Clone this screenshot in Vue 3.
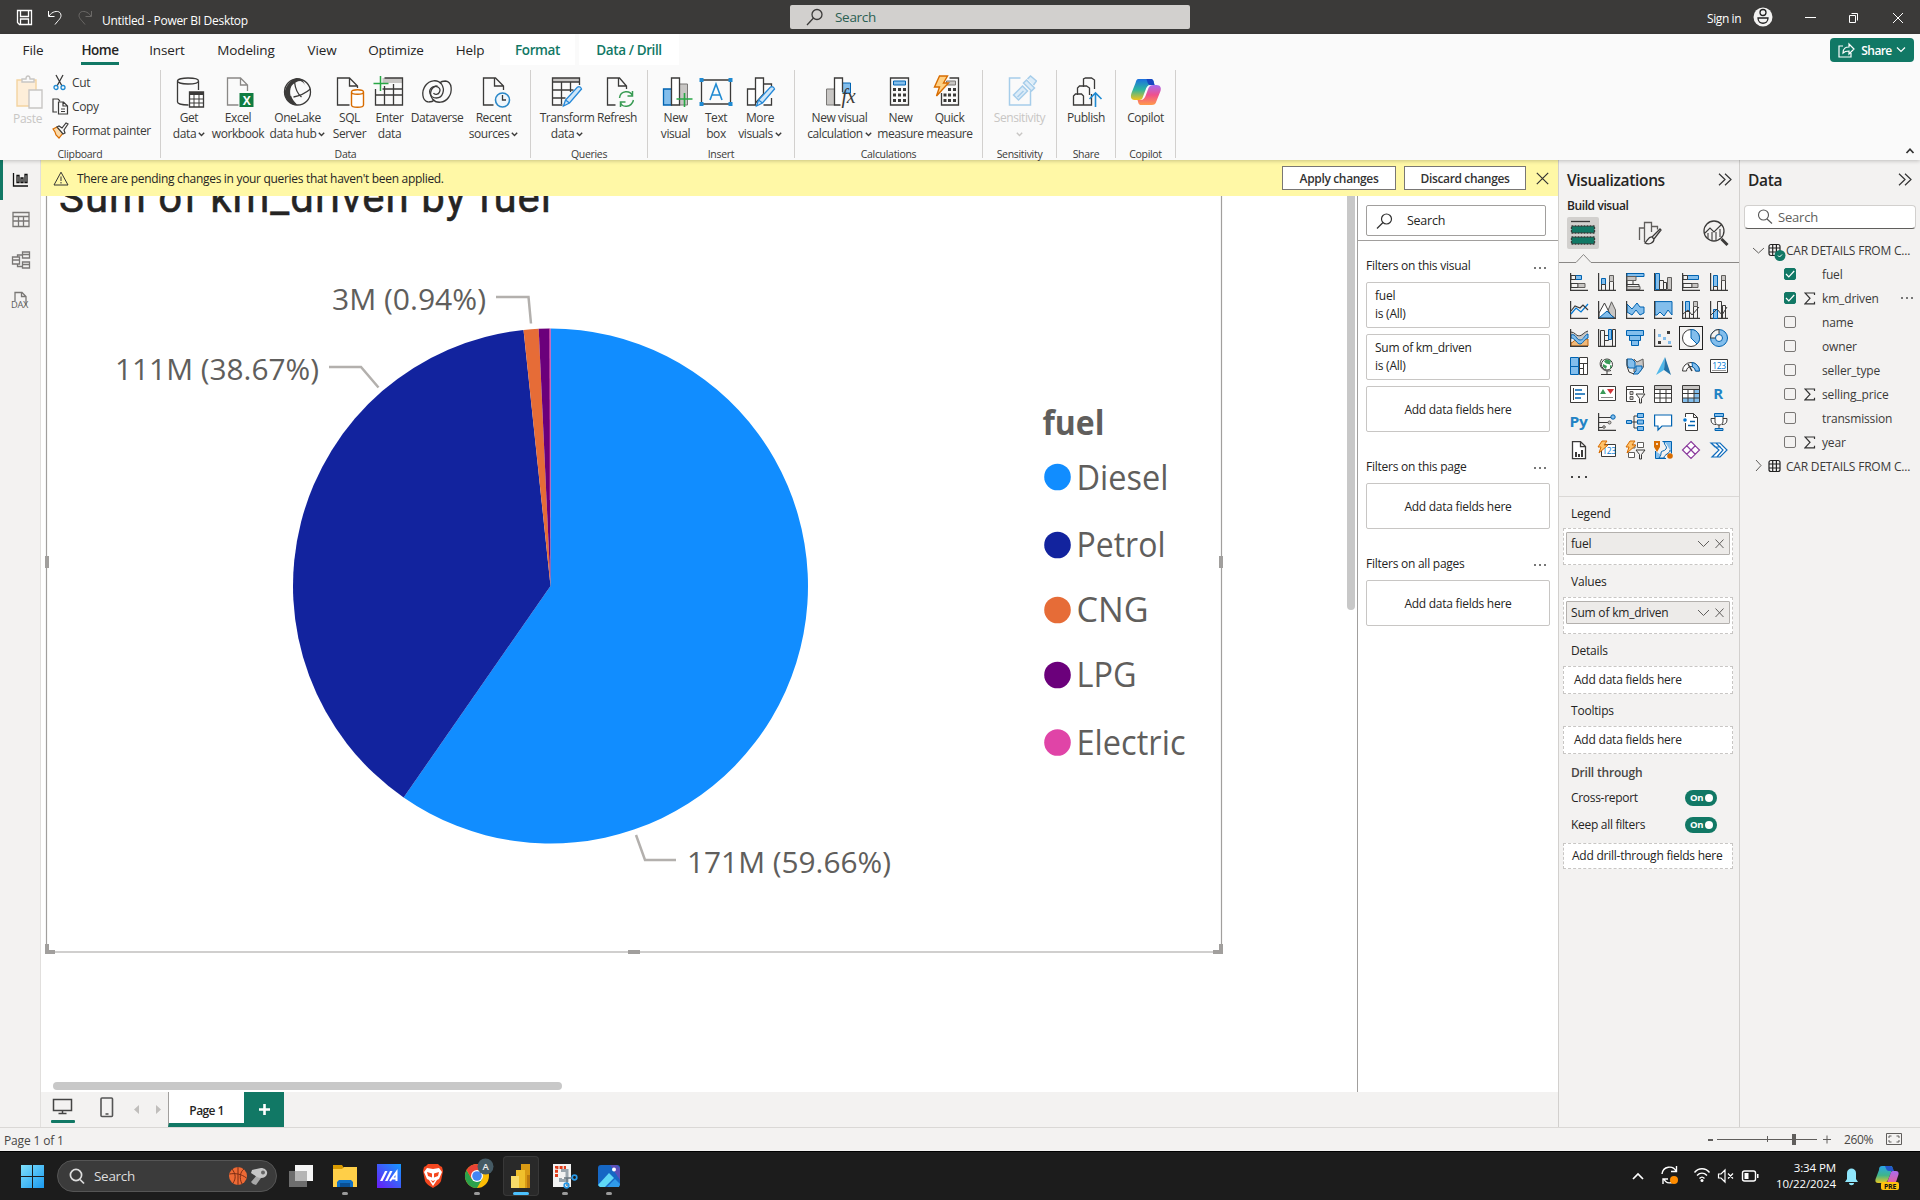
<script setup>
const D = '#3b3a39'
const dark = `fill="none" stroke="${D}" stroke-width="1.3"`
const pencil = '<path fill="#cfe6f8" stroke="#2488d8" stroke-width="1.3" d="M13 30l2-6L27 11q3-1 4 2L19 27zM15 24l4 3"/>'

const ribbonIcons = {
  get: `<path ${dark} d="M16 29C10 29 5 28 5 26V5c0-4 21-4 21 0v9M5 5c0 4 21 4 21 0"/><path fill="#fff" stroke="${D}" stroke-width="1.300" d="M17 16h14v15H17z"/><path fill="${D}" d="M17 16h14v3H17z"/><path fill="none" stroke="${D}" d="M17 23h14M17 27h14M21.500 18v13M26.500 18v13"/>`,
  excel: `<path fill="none" stroke="#8a8886" stroke-width="1.300" d="M17 29H6V2h13l7 7v6M19 2v7h7"/><path fill="#107c41" d="M18 17h14v14H18z"/><text x="25" y="28.500" text-anchor="middle" font-size="12" font-weight="700" fill="#fff">X</text>`,
  lake: `<circle cx="16" cy="16" r="13" ${dark}/><path fill="${D}" d="M15 2C7 5 1 14 4 21c2 5 7 8 11 8C9 24 7 16 10 10c2-3 6-5 9-5 3 1 4 3 5 5-2-5-4-8-9-8z"/><path ${dark} d="M13 6c1 8 3 12 7 15M12 21c6-1 11-3 17-8M15 29c-3-3-5-5-6-9"/>`,
  sql: `<path ${dark} d="M16 29H4V2h12l8 8v2M16 2v8h8"/><path fill="#fff" stroke="#d86c00" stroke-width="1.400" d="M18 16c0-3 12-3 12 0v13c0 3-12 3-12 0zM18 16c0 3 12 3 12 0"/>`,
  enter: `<path fill="#c8c6c4" d="M9 2h20v5H9z"/><path ${dark} d="M11 2h18v27H2V13M2 19h27M9 13h20M11 10v19M20 8v21"/><path fill="none" stroke="#28a745" stroke-width="1.500" d="M7 0v15M0 7.500h15"/>`,
  dataverse: `<g ${dark}><path d="M8 26C1 25 1 15 5 9.500 9 4 17 3 21 8c4 6 1 14-5 14-7 0-9-8-4-11 4-2 9 1 7 5-1 3-5 3-6 1"/><path d="M25 5c7 1 7 11 3 16.500-4 5.500-12 6.500-16 1.500-4-6-1-13 5-13M8 26c3 0 5-1 6-2M25 5c-3 0-5 1-6 2"/></g>`,
  recent: `<path ${dark} d="M16 29H6V2h12l8 8v4M17 2v8h9"/><circle cx="25" cy="24" r="7" fill="#eff6fc" stroke="#2b88c8" stroke-width="1.600"/><path ${dark} d="M25 19v5h3.500"/>`,
  transform: `<path fill="#c8c6c4" d="M2 2h27v4H2z"/><path ${dark} d="M12 29H2V2h27v7M2 6h27M2 14h21M2 22h13M11 6v22M20 6v10"/>${pencil}`,
  refresh: `<path ${dark} d="M15 29H7V2h12l7 8v3M18 2v8h8"/><path fill="none" stroke="#389b53" stroke-width="1.500" d="M19 22c1-8 11-8 13-2M32 15v5h-5M33 24c-2 8-12 8-13 2M20 31v-5h5"/>`,
  visual: `<path fill="#83beec" stroke="#0063b1" stroke-width="1.300" d="M4 13h8v16H4z"/><path fill="#c8c6c4" stroke="#797775" stroke-width="1" d="M20 8h8v21h-8z"/><path fill="#fff" stroke="${D}" stroke-width="1.300" d="M12 2h8v27h-8z"/><path fill="none" stroke="#28a745" stroke-width="1.600" d="M25 17v14M17 23h16"/>`,
  textbox: `<path ${dark} d="M2 4h29v24H2z"/><g fill="#1f8ad2"><path d="M0 2h4v4H0zM29 2h4v4h-4zM0 26h4v4H0zM29 26h4v4h-4z"/></g><path fill="none" stroke="#1f8ad2" stroke-width="1.600" d="M10.500 24L16.500 8l6 16M12.500 19h8"/>`,
  more: `<path fill="#fff" stroke="${D}" stroke-width="1.300" d="M4 29V13h8v16zM12 2h8v16l-8 9zM20 8h8v4M28 22v7h-8"/>${pencil}`,
  calc: `<path fill="#c8c6c4" stroke="#797775" d="M3 13h8v16H3z"/><path fill="#83beec" stroke="#0063b1" d="M19 7h8v10h-8z"/><path fill="#fff" stroke="${D}" stroke-width="1.300" d="M17 29h-6V2h8v14"/><text x="18" y="27" font-size="20" font-style="italic" font-family="Liberation Serif, serif" fill="${D}">fx</text>`,
  measure: `<path ${dark} d="M6 2h18v27H6z"/><path fill="#83beec" stroke="#0063b1" d="M9 5h12v4H9z"/><path fill="${D}" d="M8.500 12h3v3h-3zM13.500 12h3v3h-3zM18.500 12h3v3h-3zM8.500 17.500h3v3h-3zM13.500 17.500h3v3h-3zM18.500 17.500h3v3h-3zM8.500 23h3v3h-3zM13.500 23h3v3h-3zM18.500 23h3v3h-3z"/>`,
  quick: `<path ${dark} d="M16 2h9v27H8V17"/><path fill="#c8c6c4" stroke="#797775" d="M13 5h9v4h-9z"/><path fill="${D}" d="M14.500 12h3v3h-3zM19.500 12h3v3h-3zM10 17.500h3v3h-3zM14.500 17.500h3v3h-3zM19.500 17.500h3v3h-3zM10 23h3v3h-3zM14.500 23h3v3h-3zM19.500 23h3v3h-3z"/><path fill="#ffd083" stroke="#d86c00" stroke-width="1.400" d="M6 0h8l-4 7h5L3 20l3-9H1z"/>`,
  sensitivity: `<g fill="none" stroke="#a6cdea" stroke-width="1.500"><path d="M17 2H6v27h21V15"/><path fill="#dcecf8" d="M10 19l9-9 5 5-9 9zM20 7l3-3 8 8-3 3zM24 3l3-3 6 5-3 4M14 21l6-6"/></g>`,
  publish: `<path ${dark} d="M14 11V3l2-1h6l3 2v9M8 19v-7l2-2h7l3 2v7M4 29V20l2-2h6l2 2v9zM14 29h8V18"/><path fill="none" stroke="#1f8ad2" stroke-width="1.600" d="M26 31V17M20 23l6-6 6 6"/>`,
  copilot: `<defs><linearGradient id="cpa" x1="0" y1="0" x2="0" y2="1"><stop offset="0" stop-color="#1b6fe0"/><stop offset=".5" stop-color="#2cb5a0"/><stop offset="1" stop-color="#f4c21a"/></linearGradient><linearGradient id="cpb" x1="0" y1="0" x2="0" y2="1"><stop offset="0" stop-color="#a96cf0"/><stop offset=".5" stop-color="#f0508c"/><stop offset="1" stop-color="#ff9a4a"/></linearGradient></defs><path fill="url(#cpa)" d="M9 3h12c3 0 3 2 4 6h-4c-3 0-4 2-5 5l-3 8c-1 2-2 2-5 2H5c-4 0-4-4-3-7l4-10c1-3 1-4 3-4z"/><path fill="#1746c0" d="M17 3h4c3 0 3 2 4 6h-5c-2-1-2-3-3-6z"/><path fill="url(#cpb)" d="M24 9h3c4 0 5 3 4 6l-4 10c-1 3-2 4-5 4H12c-3 0-3-2-4-5h3c3 0 4-2 5-4l3-8c1-2 2-3 5-3z"/>`
}

const groups = [
  { name: 'Data', w: 370, pad: 4, items: [
    ['get', 48, 'Get', 'data', 1], ['excel', 50, 'Excel', 'workbook'], ['lake', 69, 'OneLake', 'data hub', 1],
    ['sql', 35, 'SQL', 'Server'], ['enter', 45, 'Enter', 'data'], ['dataverse', 50, 'Dataverse', ''], ['recent', 63, 'Recent', 'sources', 1]] },
  { name: 'Queries', w: 117, pad: 7, items: [['transform', 58, 'Transform', 'data', 1], ['refresh', 42, 'Refresh', '']] },
  { name: 'Insert', w: 147, pad: 7, items: [['visual', 41, 'New', 'visual'], ['textbox', 40, 'Text', 'box'], ['more', 48, 'More', 'visuals', 1]] },
  { name: 'Calculations', w: 188, pad: 9, items: [['calc', 71, 'New visual', 'calculation', 1], ['measure', 51, 'New', 'measure'], ['quick', 47, 'Quick', 'measure']] },
  { name: 'Sensitivity', w: 74, pad: 7, items: [['sensitivity', 59, 'Sensitivity', '', 1]] },
  { name: 'Share', w: 59, pad: 7, items: [['publish', 44, 'Publish', '']] },
  { name: 'Copilot', w: 60, pad: 7, items: [['copilot', 45, 'Copilot', '']] }
]

const tabs = [
  ['File', 66], ['Home', 68, 'on'], ['Insert', 66], ['Modeling', 92], ['View', 60], ['Optimize', 88], ['Help', 60]
]

const B = 'fill="#83beec" stroke="#0063b1"'
const G = 'fill="#c8c6c4" stroke="#605e5c"'
const L = `fill="none" stroke="${D}"`
const W = `fill="#fff" stroke="${D}"`
const axis = `<path ${L} stroke-width="1.200" d="M.6 0v17.400H18"/>`
const bolt = '<path fill="#ffc36b" stroke="#d86c00" d="M4 0h5L6 4h4L1 12l2-6H0z"/>'
const funnel = `<path fill="#f3f2f1" stroke="${D}" d="M10 9h9l-3.500 4.500V18h-2v-4.500z"/>`
const vizIcons = [
  axis + `<path ${B} d="M5.500 2.500h6v4h-6z"/><path ${L} d="M1 2.500h4.500v4H1zM1 10.500h7v4H1z"/><path ${G} d="M8 10.500h7v4H8z"/>`,
  axis + `<path ${B} d="M3.500 5.500h4v6h-4z"/><path ${L} d="M3.500 11.500h4v6h-4zM11.500 8.500h4v9h-4z"/><path ${G} d="M11.500 2.500h4v6h-4z"/>`,
  axis + `<path ${B} d="M1 .5h17v3H1z"/><path ${L} d="M1 11.500h12v3H1zM1 7.500h6v4H1z"/><path ${G} d="M1 3.500h9v4H1zM1 13.500h13v3H1z"/>`,
  axis + `<path ${B} d="M1.500.5h4v16h-4z"/><path ${L} d="M5.500 7.500h4v9h-4zM9.500 9.500h3v7h-3z"/><path ${G} d="M13.500 4.500h4v12h-4z"/>`,
  axis + `<path ${B} d="M5.500 2.500h11v4h-11z"/><path ${L} d="M1 2.500h4.500v4H1zM1 10.500h9v4H1z"/><path ${G} d="M10 10.500h6v4h-6z"/>`,
  axis + `<path ${B} d="M3.500 2.500h4v11h-4z"/><path ${L} d="M3.500 13.500h4v4h-4zM11.500 6.500h4v11h-4z"/><path ${G} d="M11.500 2.500h4v5h-4z"/>`,
  axis + `<path fill="none" stroke="#0078d4" stroke-width="1.200" d="M1 13l5-6 5 4 7-8"/><path ${L} stroke-width="1.200" d="M1 10l4-5 5 2 3-3 5 5"/>`,
  `<path ${G} d="M9 12L13.500.8 17.500 9v8z"/><path ${W} d="M1 12L6.500 2 12 13l-6 4H1z"/><path ${B} d="M1 17l8-7 7 7z"/>` + axis,
  `<path ${B} d="M1 3l5 5 5-6 3 4h4v6l-4 2-4-5-4 5-5-3z"/>` + axis,
  `<path ${B} d="M1 .6h17V14l-4-5-4 6-4-4-3 3H1z"/>` + axis,
  axis + `<path ${B} d="M3.500.5h4v10h-4z"/><path ${L} d="M3.500 10.500h4v7h-4zM11.500 5.500h4v12h-4zM1 13l5-4 4 5 7-8"/><path ${G} d="M11.500.5h4v5h-4z"/>`,
  axis + `<path ${L} d="M7.500.5h4v17h-4zM12.500 4.500h3v13h-3z"/><path ${B} d="M3.500 8.500h4v9h-4z"/><path ${L} d="M1 14l6-6 5 6 5-8"/>`,
  `<path fill="#c8c6c4" d="M1 3l8 5 9-6v5l-9 4-8-5z"/><path fill="#f0b878" stroke="#c2640c" d="M1 14c3-1 4-4 6-4s3 4 5 3 3-3 6-3v7H1z"/><path ${B} d="M1 6c5-2 5 5 9 5s4-5 8-6v4c-4 1-5 6-8 6s-5-6-9-6z"/><path ${L} d="M1 3c4 0 5 4 8 4s5-4 9-5"/>` + axis,
  axis + `<path ${L} d="M2.500 1.500h4v16h-4zM14.500.5h3v17h-3z"/><path ${L} d="M6.500 6.500h4v5h-4z"/><path ${B} d="M10.500.5h3v10h-3z"/>`,
  `<path ${B} d="M.5 1.500h17v5H.5zM3.500 6.500h11v5h-11zM5.500 11.500h7v5h-7z"/>`,
  axis + `<path fill="#83beec" d="M4 5h3v3H4zM9 8h3v3H9zM14 12h3v3h-3z"/><path fill="${D}" d="M13 2h3v3h-3zM4 12h3v3H4z"/>`,
  `<circle cx="9" cy="9" r="8.500" ${W}/><path ${B} d="M9 9V.5a8.500 8.500 0 0 1 6 14.500z"/>`,
  `<circle cx="9" cy="9" r="8.500" ${B}/><path fill="#f3f2f1" stroke="${D}" d="M9 .5A8.500 8.500 0 0 0 .5 9h5A3.500 3.500 0 0 1 9 5.500z"/><circle cx="9" cy="9" r="3.500" fill="#f3f2f1" stroke="#0063b1"/>`,
  `<path ${W} d="M9.500.5h8v17h-8z"/><path ${B} d="M.5.500h8v9H.5zM.5 9.500h8v8H.5z"/><path ${L} d="M9 6.500h8.500M13.500 6.500v11M9 11.500h4.500"/>`,
  `<circle cx="9" cy="7.500" r="5.500" ${W}/><path fill="#3a9a58" d="M8 2.500l5 1-1 4-4-1-2-2zM5 7l4 2-1 3-3-2zM12 8l2 1-2 3z"/><path ${L} d="M4 2C-1 8 5 16 13 13.500M9 14v3.500M3 17.500h11"/>`,
  `<path ${G} d="M8 2l3 3 6-3 .5 8-4 5H8z"/><path ${B} d="M1 2h5l3 3v6H3L1 8zM10 9h6v3l-4 5H7l3-3z"/><path ${L} d="M1 2v7l2 6 5 2"/>`,
  `<path fill="#50b8ea" d="M11 0L2 18l8-5z"/><path fill="#2272a8" d="M11 0l6 18-7-5z"/>`,
  `<path ${W} d="M.5 14A8.500 8.500 0 0 1 17.500 14h-4a4.500 4.500 0 0 0-9 0z"/><path ${B} d="M10 5.500a8.500 8.500 0 0 1 7.500 8.500h-4a4.500 4.500 0 0 0-3-4z"/><path stroke="${D}" stroke-width="1.500" d="M6 7l4 7"/>`,
  `<path ${W} d="M.5 2.500h17v13H.5z"/><text x="9" y="12" font-size="8.500" text-anchor="middle" fill="#0078d4">123</text><path stroke="#999" d="M2 13.500h14"/>`,
  `<path ${W} d="M.5.500h17v17H.5z"/><path ${L} d="M3.500 3v12"/><path stroke="#0063b1" stroke-width="1.700" d="M5 5h7M5 9h10M5 13h6"/>`,
  `<path ${W} d="M.5 1.500h17v14H.5z"/><path fill="#3a9a58" d="M2 9l3-5 3 5z"/><path fill="#d13438" d="M9 4h7l-3.500 5z"/><path stroke="#888" d="M3 12.500h12"/>`,
  `<path ${W} d="M10 16.500H.5V1.500h17V8M.5 4.500h17"/><path ${G} d="M4 6.500h3v3H4zM4 11.500h3v3H4z"/>` + funnel,
  `<path ${W} d="M.5.500h17v17H.5z"/><path fill="#c8c6c4" d="M1 1h16v3H1z"/><path ${L} d="M.5 4.500h17M.5 8.500h17M.5 13h17M6 4.500v13M12 4.500v13"/>`,
  `<path ${W} d="M.5.500h17v17H.5z"/><path fill="#c8c6c4" d="M1 1h16v3H1z"/><path fill="#83beec" d="M12 5h5v12H1v-4h11z"/><path ${L} d="M.5 4.500h17M.5 8.500h17M.5 13h17M6 4.500v13M12 4.500v13"/>`,
  `<text x="8" y="14" font-size="15" font-weight="700" text-anchor="middle" fill="#2283c5">R</text>`,
  `<text x="8.500" y="14" font-size="15" font-weight="700" text-anchor="middle" textLength="18" lengthAdjust="spacingAndGlyphs" fill="#2283c5">Py</text>`,
  axis + `<path ${L} d="M1 4.500h12M1 9.500h9M1 14.500h4"/><circle cx="15" cy="4" r="2.200" ${B}/><circle cx="11.500" cy="9.500" r="1.500" ${G}/><circle cx="6" cy="14" r="1.300" ${G}/>`,
  `<path ${L} d="M5 9h6M8 9V3h4M8 9v6h4"/><path ${B} d="M.5 7.500h5v3h-5zM11.500.5h6v4h-6zM11.500 7h6v4h-6zM11.500 13.500h6v4h-6z"/>`,
  `<path fill="#fff" stroke="#0063b1" stroke-width="1.200" d="M.6 2h17v11H8l-4 4v-4H.6z"/>`,
  `<path ${W} d="M3.500 4V.5h8l4 4v13h-12V10M11.500.5v4h4"/><circle cx="3" cy="7" r="1.800" fill="#0078d4"/><path stroke="#0063b1" stroke-width="1.300" d="M8 8.500h5M6 12.500h7"/>`,
  `<path ${W} d="M5 5.500H1c0 4 1 6 5 6M13 5.500h4c0 4-1 6-5 6M5 3v6c1 4 7 4 8 0V3M9 12v4"/><path ${B} d="M4.500.5h9v3h-9zM5 15.500h8v2H5z"/>`,
  `<path ${W} stroke-width="1.300" d="M2.500.600h8l5 5v12h-13zM10.500.600v5h5"/><path fill="${D}" d="M5 11h2v5H5zM8 13h2v3H8zM11 9h2v7h-2z"/>`,
  `<path ${W} d="M3.500 3.500h14v12h-14z"/><text x="11" y="13" font-size="8.500" text-anchor="middle" fill="#0078d4">123</text>` + bolt,
  `<path fill="#fff" stroke="#605e5c" d="M11.500 1.500h6v5h-6zM2.500 11.500h6v5h-6z"/><path fill="#fff" stroke="#605e5c" d="M6 4h3v3H5z"/>` + bolt + funnel,
  `<path fill="#83beec" stroke="#0063b1" d="M8.500.5h9v12M12 17.500H1.500V10"/><path fill="#f3f2f1" stroke="#0063b1" d="M11 1c-2 3 3 4 1 7s-5 1-5 4-1 3-2 5h5c0-4 6-4 6-8"/><path fill="#d86c00" d="M0 0h6v6l-3 5-3-5z"/><circle cx="16" cy="15" r="2.800" fill="#d86c00"/><circle cx="3" cy="3" r="1" fill="#fff"/>`,
  `<path fill="#fff" stroke="#8a3a9c" stroke-width="1.200" d="M9 .5l4.200 4.200L9 9 4.800 4.700zM9 9l4.200 4.300L9 17.500l-4.200-4.200zM4.700 4.800L9 9l-4.300 4.200L.5 9zM13.300 4.800L17.500 9l-4.200 4.200L9 9z"/>`,
  `<path fill="#fff" stroke="#0f6cbd" stroke-width="1.200" d="M1 2h9l7 7-7 7H2l7-7zM6 2l7 7-6 7M1 2l4 4h6"/>`
]

const cx = 550.5, cy = 586, R = 257.5
const pct = [['#118dff', 59.66], ['#12239e', 38.67], ['#e66c37', 0.94], ['#6b007b', 0.68], ['#e044a7', 0.05]]
let acc = 0
const slices = pct.map(([color, p]) => {
  const a0 = acc / 100 * 2 * Math.PI
  acc += p
  const a1 = acc / 100 * 2 * Math.PI
  const pt = a => `${(cx + R * Math.sin(a)).toFixed(2)} ${(cy - R * Math.cos(a)).toFixed(2)}`
  return { color, d: `M${cx} ${cy}L${pt(a0)}A${R} ${R} 0 ${p > 50 ? 1 : 0} 1 ${pt(a1)}Z` }
})
const legend = [
  ['Diesel', '#118dff', 477, 489.500, 91], ['Petrol', '#12239e', 545, 556.500, 88], ['CNG', '#e66c37', 610, 622, 71],
  ['LPG', '#6b007b', 675, 687, 59], ['Electric', '#e044a7', 742.500, 755, 108]
]
const filterSections = [
  { title: 'Filters on this visual', cards: ['fuel', 'Sum of km_driven'] },
  { title: 'Filters on this page', cards: [] },
  { title: 'Filters on all pages', cards: [] }
]
const fields = [
  ['fuel', 1, 0], ['km_driven', 1, 1], ['name', 0, 0], ['owner', 0, 0], ['seller_type', 0, 0],
  ['selling_price', 0, 1], ['transmission', 0, 0], ['year', 0, 1]
]

const apps = [
  { k: 'view', svg: '<path fill="#f5f5f5" d="M7 2h18v16H7z"/><path fill="#6d6d6d" d="M1 8h18v16H1z"/><path fill="#b5b5b5" d="M7 8h12v10H7z"/>' },
  { k: 'folder', run: 1, svg: '<path fill="#d99a00" d="M1 2h9l2 3v6H1z"/><path fill="#ffcf48" d="M1 6h9l2-2h13v20H1z"/><path fill="#0f6fc5" d="M5 24v-5l2-2h12l2 2v5z"/><path fill="#0a4f93" d="M8 20h10v4H8z"/>' },
  { k: 'ma', svg: '<defs><linearGradient id="ma" x1="0" y1="1" x2="1" y2="0"><stop offset="0" stop-color="#6a1bf5"/><stop offset="1" stop-color="#1499ff"/></linearGradient></defs><path fill="url(#ma)" d="M1 1h24v24H1z"/><path fill="#fff" d="M4 18L9 8h2.500L6.500 18zM9 18l5-10h2.500l-5 10z"/><path fill="none" stroke="#fff" stroke-width="2" d="M14 18l6.500-9v9M16 15.500h4"/>' },
  { k: 'brave', svg: '<path fill="#f4471f" d="M8 1h10l2 2 2 1 1 4-2 10c-1 3-5 5-8 7-3-2-7-4-8-7L3 8l1-4 2-1z"/><path fill="#fff" d="M7 5l6 1 6-1 3 4-3 7-2 1-4 6-4-6-2-1-3-7z"/><path fill="#f4471f" d="M7 9l5 1.500v4L8 13zM19 9l-5 1.500v4l4-1.500zM10.500 17l2.500 1 2.500-1-2.500 3z"/>' },
  { k: 'chrome', run: 1, svg: '<circle cx="13" cy="13" r="12" fill="#fbbc05"/><path fill="#2ba24c" d="M2.600 7A12 12 0 0 0 13 25l5.200-9H7.800z"/><path fill="#ea4335" d="M2.600 7a12 12 0 0 1 20.800 0H13l-5.200 9z"/><circle cx="13" cy="13" r="6" fill="#fff"/><circle cx="13" cy="13" r="4.800" fill="#4285f4"/><circle cx="21.500" cy="3.500" r="8" fill="#455a64"/><text x="21.500" y="7" font-size="9.500" font-weight="600" fill="#eee" text-anchor="middle">A</text>' },
  { k: 'pbi', run: 2, svg: '<path fill="#d99a14" d="M13 1h9v24h-9z"/><path fill="#b9770e" d="M19 12h3v13h-3z"/><path fill="#f0c02c" d="M8 7h9v18H8z"/><path fill="#f8dc6a" d="M3 13h8v12H3z"/>' },
  { k: 'snip', run: 1, svg: '<path fill="#f2f2f2" d="M1 1h18v23H1z"/><path fill="none" stroke="#e03c1a" stroke-width="3" stroke-dasharray="3 1.200" d="M4.500 14V4.500H14"/><path fill="none" stroke="#9aa5ad" stroke-width="3" d="M8.500 15V17.500H15V7.500H9"/><path stroke="#6b7780" stroke-width="1.500" d="M12 15h9M15 15v8"/><circle cx="22.500" cy="14.500" r="2.300" fill="none" stroke="#2899e8" stroke-width="1.700"/><circle cx="14.500" cy="22.500" r="2.300" fill="none" stroke="#2899e8" stroke-width="1.700"/>' },
  { k: 'photos', run: 1, svg: '<rect x="2" y="2" width="22" height="22" rx="3" fill="#1667c4"/><path fill="#5a4fb8" d="M14 2h7l3 3v12z"/><path fill="#2f9bea" d="M11 24l8-8 5 5-1 3z"/><path fill="#5fd8f5" d="M2 22l11-12 5 5-9 9H4z"/><circle cx="18" cy="6.500" r="2" fill="#fff"/>' }
]
</script>

<template>
  <div class="app">
    <header class="titlebar">
      <svg class="qa" width="100" height="34" fill="none" stroke="#fff" stroke-width="1.300">
        <path d="M17.500 10.500h14v14h-12l-2-2zM20.500 10.500v6h8v-6M20.500 24v-5h8v5" />
        <path stroke-width="1" d="M48.500 11v5.500h6M49 16c4-6 12-6 12-.5 0 3-3 5-6 9" />
        <path stroke="#6b6967" stroke-width="1" d="M91.500 11v5.500h-6M91 16c-4-6-12-6-12-.5 0 3 3 5 6 9" />
      </svg>
      <span class="wtitle">Untitled - Power BI Desktop</span>
      <div class="tsearch">
        <svg width="18" height="18" fill="none" stroke="#3b3a39" stroke-width="1.300"><circle cx="11" cy="6.500" r="5" /><path d="M7.500 10L1 17" /></svg>
        <span>Search</span>
      </div>
      <span class="signin">Sign in</span>
      <svg width="157" height="34" fill="none" stroke="#fff">
        <circle cx="10" cy="17" r="9.500" fill="#f3f2f1" stroke="none" />
        <g stroke="#222" stroke-width="1.300"><circle cx="10" cy="12.500" r="3" /><path d="M5 18h10c0 7-10 7-10 0z" /></g>
        <path d="M52 17.500h11M96.500 15.500h6v7h-6zM98.500 13.500h6v7M140 13l10 10M150 13l-10 10" />
      </svg>
    </header>

    <section class="ribbon">
      <nav class="tabs">
        <div v-for="t in tabs" :key="t[0]" class="tab" :class="{ on: t[2] }" :style="{ width: t[1] + 'px' }"><span>{{ t[0] }}</span></div>
        <div class="tab ctx c1"><span>Format</span></div>
        <div class="tab ctx c2"><span>Data / Drill</span></div>
        <button class="share">
          <svg width="17" height="16" fill="none" stroke="#fff" stroke-width="1.200"><path d="M5 4H1v11h12v-4M5 11c0-5 3-6 6-6V2l5 5-5 5V9c-3 0-5 1-6 2z" /></svg>
          Share
          <svg width="10" height="8" fill="none" stroke="#fff" stroke-width="1.200"><path d="M1 1.500l4 4 4-4" /></svg>
        </button>
      </nav>
      <div class="groups">
        <div class="group clip">
          <div class="cliprow">
            <div class="paste">
              <svg width="32" height="34" fill="none" stroke-width="1.400"><path fill="#fdeed9" stroke="#f3d3a0" d="M5 5h19v26H5z" /><path fill="#fafafa" stroke="#c8c6c4" d="M10 7V4h4c0-4 4-4 4 0h4v3zM17 15h13v18H17z" /></svg>
              <span>Paste</span>
            </div>
            <div class="small">
              <div><svg width="17" height="17" fill="none" stroke="#3b3a39" stroke-width="1.300"><path d="M4 1l6 11M11 1L5 12" /><circle cx="4" cy="13.500" r="2" stroke="#1f8ad2" /><circle cx="11" cy="13.500" r="2" stroke="#1f8ad2" /></svg>Cut</div>
              <div><svg width="17" height="17" fill="none" stroke="#3b3a39" stroke-width="1.200"><path d="M5 14H1V1h5l2 2M6.500 4h5l4 4v8h-9zM11 4v4h4M9 11h4M9 13.500h4" /></svg>Copy</div>
              <div><svg width="17" height="17" fill="none" stroke="#3b3a39" stroke-width="1.200"><path fill="#fbd9a8" stroke="#d86c00" d="M1 7l4-2 6 6-4 5-3-3-1-3z" /><path fill="#fafafa" d="M5 5l2-1 3 2 4-5 2 1-4 6 1 3-2 1z" /></svg>Format painter</div>
            </div>
          </div>
          <div class="gname">Clipboard</div>
        </div>
        <div v-for="g in groups" :key="g.name" class="group" :style="{ width: g.w + 'px' }">
          <div class="gitems" :style="{ paddingLeft: g.pad + 'px' }">
            <div v-for="it in g.items" :key="it[0]" class="gbtn" :class="{ dis: it[0] === 'sensitivity' }" :style="{ width: it[1] + 'px' }">
              <svg width="34" height="34" viewBox="-0.500 -1 34 34" v-html="ribbonIcons[it[0]]"></svg>
              <span>{{ it[2] }}</span>
              <span class="l2">{{ it[3] }}<svg v-if="it[4]" class="car" width="7" height="5"><path fill="none" stroke="currentColor" stroke-width="1.400" d="M.8.800l2.700 2.700L6.200.800" /></svg></span>
            </div>
          </div>
          <div class="gname">{{ g.name }}</div>
        </div>
        <svg class="collapse" width="10" height="8"><path fill="none" stroke="#333" stroke-width="1.700" d="M1.500 6L5 2.200 8.500 6" /></svg>
      </div>
    </section>

    <main class="body">
      <aside class="rail">
        <svg width="40" height="180" fill="none" stroke="#797775" stroke-width="1.300">
          <path stroke="#111" stroke-width="1.300" d="M13.500 13v13H28M17 15.500h2v7h-2zM21 18h2v4.500h-2zM25 14.500h2v8h-2z" />
          <path d="M13 52.500h16v14H13zM13 56.500h16M13 61h16M18.500 56v10M23.500 56v10" />
          <path d="M22.500 92h7v6h-7zM22.500 102h7v6h-7zM12.500 97h7v7h-7zM12.500 100h7M22.500 94.500h7M22.500 104.500h7M22 95h-4.500v2M17.500 104v2.500H22" />
          <path d="M15 141v-8.500h7l4 4V145M21.500 132.500v4H26" />
          <text x="11" y="148" font-size="8.500" textLength="17" lengthAdjust="spacingAndGlyphs" fill="#605e5c" stroke="none">DAX</text>
        </svg>
      </aside>

      <div class="center">
        <div class="banner">
          <svg width="16" height="15" fill="none" stroke="#333"><path d="M8 1.200L15 14H1zM8 5.500v4.500M8 11v1.500" /></svg>
          <span>There are pending changes in your queries that haven't been applied.</span>
          <button class="b1">Apply changes</button>
          <button class="b2">Discard changes</button>
          <svg class="bx" width="13" height="13" fill="none" stroke="#333" stroke-width="1.200"><path d="M.8.800l11.400 11.400M12.200.800L.8 12.200" /></svg>
        </div>
        <div class="work">
          <div class="canvas">
            <svg width="1316" height="896" viewBox="41 196 1316 896">
              <path d="M46.500 190V952H1221.500V190" fill="none" stroke="#a19f9d" stroke-width="1.200" />
              <text x="59" y="211.500" class="ctitle" textLength="492" lengthAdjust="spacing">Sum of km_driven by fuel</text>
              <path v-for="s in slices" :key="s.color" :d="s.d" :fill="s.color" />
              <path d="M550 329V500" stroke="#e044a7" stroke-width="0.700" />
              <g fill="none" stroke="#b3b0ad" stroke-width="2.500">
                <path d="M496 297H528.500L531 323.500" /><path d="M329 367H361L378.500 387.500" /><path d="M636 835L645 860H676" />
              </g>
              <g class="dl">
                <text x="332" y="310" textLength="154" lengthAdjust="spacingAndGlyphs">3M (0.94%)</text>
                <text x="115" y="380" textLength="204" lengthAdjust="spacingAndGlyphs">111M (38.67%)</text>
                <text x="687" y="873" textLength="204" lengthAdjust="spacingAndGlyphs">171M (59.66%)</text>
              </g>
              <text x="1042.500" y="434.500" class="lg b" textLength="62" lengthAdjust="spacingAndGlyphs">fuel</text>
              <g v-for="l in legend" :key="l[0]">
                <circle cx="1057.500" :cy="l[2]" r="13.300" :fill="l[1]" />
                <text x="1076.500" :y="l[3]" class="lg" :textLength="l[4] + 1" lengthAdjust="spacingAndGlyphs">{{ l[0] }}</text>
              </g>
              <g fill="#a19f9d">
                <path d="M1219 556h4v12h-4zM45 556h4v12h-4zM628 950h12v4h-12z" />
                <path d="M45 944h4v6h6v4H45zM1223 944h-4v6h-6v4h10z" />
              </g>
              <rect x="1347" y="180" width="8" height="430" rx="4" fill="#c8c8c8" />
              <rect x="53" y="1082" width="509" height="8" rx="4" fill="#c8c8c8" />
            </svg>
          </div>
          <div class="filters">
            <div class="fsbox"><div class="fs"><svg width="17" height="16" fill="none" stroke="#333" stroke-width="1.200"><circle cx="10.500" cy="6" r="5" /><path d="M7 9.500L1 15.500" /></svg>Search</div></div>
            <div v-for="s in filterSections" :key="s.title" class="fsec">
              <div class="fh"><span>{{ s.title }}</span><i class="dots"></i></div>
              <div v-for="c in s.cards" :key="c" class="card"><div>{{ c }}</div><div>is (All)</div></div>
              <div class="card add">Add data fields here</div>
            </div>
          </div>
        </div>
        <footer class="pages">
          <div class="dev"><svg width="21" height="18" fill="none" stroke="#444" stroke-width="1.500"><path d="M1.500 2.500h18v11h-18zM10.500 13.500V16M6.500 16.500h8" /></svg><i></i></div>
          <svg class="phone" width="14" height="21" fill="none" stroke="#555" stroke-width="1.600"><rect x="1" y="1" width="11.500" height="18.500" rx="1" /><path d="M5.500 17h3" /></svg>
          <svg class="arrows" width="28" height="10" fill="#c0bebc"><path d="M5 0v9L0 4.500zM22 0v9l5-4.500z" /></svg>
          <div class="ptab">Page 1</div>
          <div class="plus"><svg width="11" height="11"><path stroke="#fff" stroke-width="2.600" d="M5.500 0v11M0 5.500h11" /></svg></div>
        </footer>
      </div>

      <aside class="viz">
        <div class="ph"><span>Visualizations</span><svg width="14" height="13" fill="none" stroke="#333" stroke-width="1.200"><path d="M1 .8l6 5.700-6 5.700M7 .8l6 5.700-6 5.700" /></svg></div>
        <div class="bv">Build visual</div>
        <svg class="modes" width="180" height="48" fill="none" stroke="#3b3a39" stroke-width="1.300">
          <rect x="8" y="1" width="32" height="32" rx="2" fill="#d2d0ce" stroke="none" />
          <path d="M12 5.500h19" /><path fill="#117865" stroke-dasharray="2 1" d="M12.500 10h23v7h-23zM12.500 21h23v7h-23z" />
          <path stroke="#605e5c" d="M80.500 24V12h5v14M85.500 22V6.500h7V16M92.500 10.500h6v3" /><path fill="#f3f2f1" d="M101 13l-8 8 2 2 7-9zM93 21c-3-1-4 3-7 6 4 2 9 0 9-4z" />
          <circle cx="155" cy="15" r="10" /><path stroke-width="1.100" d="M146 17l5-5 4 4 8-8M149 17v5M153 16v8M157 16v8M161 13v8" /><path stroke-width="3" d="M162.500 23l6 6" />
          <path stroke="#8a8886" stroke-width="1" d="M0 46.500h17l7.500-8 7.500 8h148" />
        </svg>
        <div class="vgrid">
          <div v-for="(v, i) in vizIcons" :key="i" :class="{ sel: i === 16 }"><svg width="18" height="18" overflow="visible" v-html="v"></svg></div>
        </div>
        <div class="vdots"><i></i><i></i><i></i></div>
        <div class="wells">
          <template v-for="w in [['Legend', 'fuel'], ['Values', 'Sum of km_driven']]" :key="w[0]">
            <div class="wl">{{ w[0] }}</div>
            <div class="well"><div class="chip"><span>{{ w[1] }}</span>
              <svg width="28" height="10" fill="none" stroke="#605e5c"><path d="M1 2l5.500 5.500L12 2M18.500.5l8 8.500M26.500.5l-8 8.500" /></svg></div></div>
          </template>
          <template v-for="w in ['Details', 'Tooltips']" :key="w">
            <div class="wl">{{ w }}</div>
            <div class="well empty">Add data fields here</div>
          </template>
          <div class="dt">Drill through</div>
          <div class="tg"><span>Cross-report</span><b>On<i></i></b></div>
          <div class="tg k"><span>Keep all filters</span><b>On<i></i></b></div>
          <div class="well drill">Add drill-through fields here</div>
        </div>
      </aside>

      <aside class="data">
        <div class="ph"><span>Data</span><svg width="14" height="13" fill="none" stroke="#333" stroke-width="1.200"><path d="M1 .8l6 5.700-6 5.700M7 .8l6 5.700-6 5.700" /></svg></div>
        <div class="ds"><svg width="16" height="16" fill="none" stroke="#555" stroke-width="1.100"><circle cx="6.500" cy="6" r="5" /><path d="M10 10l5 4.500" /></svg>Search</div>
        <div class="trow">
          <svg width="34" height="22" fill="none" stroke="#605e5c"><path d="M1 9l5.500 5L12 9" /><g stroke="#222" stroke-width="1.200"><rect x="17" y="5.500" width="11" height="11" rx="2" /><path d="M17 9h11M17 13h11M20.700 5.500v11M24.400 5.500v11" /></g><circle cx="28" cy="16.500" r="5.500" fill="#117865" stroke="none" /><path stroke="#fff" d="M26 16.500l1.500 1.500 2.500-2.500" /></svg>
          <span>CAR DETAILS FROM C...</span>
        </div>
        <div v-for="f in fields" :key="f[0]" class="frow">
          <i class="cb" :class="{ ck: f[1] }"><svg v-if="f[1]" width="10" height="10"><path fill="none" stroke="#fff" stroke-width="1.200" d="M1 5l2.800 2.800L9.200 2" /></svg></i>
          <svg class="sig" width="12" height="13"><path v-if="f[2]" fill="none" stroke="#333" stroke-width="1.200" d="M10.500 3V1H1l5 5.300L1 11.800h9.500v-2" /></svg>
          <span>{{ f[0] }}</span>
          <i v-if="f[0] === 'km_driven'" class="dots"></i>
        </div>
        <div class="trow">
          <svg width="34" height="22" fill="none" stroke="#605e5c"><path d="M4 5l5 5.500-5 5.500" /><g stroke="#222" stroke-width="1.200"><rect x="17" y="5.500" width="11" height="11" rx="2" /><path d="M17 9h11M17 13h11M20.700 5.500v11M24.400 5.500v11" /></g></svg>
          <span>CAR DETAILS FROM C...</span>
        </div>
      </aside>
    </main>

    <div class="status">
      <span>Page 1 of 1</span>
      <svg width="130" height="24" fill="none" stroke="#605e5c"><path stroke-width="2" d="M2 12h5" /><path d="M11 11.500h100M61.500 8v6M117 11.500h8M121 7.500v8" /><path fill="#605e5c" stroke="none" d="M86 6h4v11h-4z" /></svg>
      <span class="zoom">260%</span>
      <svg class="fit" width="17" height="13" fill="none" stroke="#605e5c"><path d="M.5.500h15v11H.5z" /><path d="M3 5V3h2.500M10.500 3H13v2M3 7v2h2.500M10.500 9H13V7" /></svg>
    </div>

    <div class="taskbar">
      <svg class="start" width="23" height="23"><defs><linearGradient id="win" x1="0" y1="0" x2="1" y2="1"><stop offset="0" stop-color="#7fe0fb" /><stop offset="1" stop-color="#1a9af0" /></linearGradient></defs><path fill="url(#win)" d="M0 0h11v11H0zM12 0h11v11H12zM0 12h11v11H0zM12 12h11v11H12z" /></svg>
      <div class="tks">
        <svg width="16" height="17" fill="none" stroke="#ddd" stroke-width="1.700"><circle cx="7" cy="7" r="5.600" /><path d="M11 11.500l4 4" /></svg>
        <span>Search</span>
        <svg width="42" height="22"><circle cx="10" cy="11" r="9" fill="#ee6a35" /><path fill="none" stroke="#7a2c14" d="M10 2v18M1.500 9c6-1 12 0 17 4M4 4c4 5 4 10 1 14M16 4c-4 3-5 9-2 15" /><path fill="#a8a8a8" d="M23 17l6-7 4 3-5 7-3-1z" /><path fill="#c6c6c6" d="M24 5l9-2c4 0 7 3 6 6-1 4-6 5-10 3l-6-4z" /><circle cx="35" cy="7.500" r="2" fill="#666" /></svg>
      </div>
      <div class="apps">
        <div v-for="a in apps" :key="a.k" class="appi" :class="{ act: a.run === 2 }">
          <svg width="26" height="26" overflow="visible" v-html="a.svg"></svg>
          <i v-if="a.run"></i>
        </div>
      </div>
      <svg class="tray" width="140" height="48" fill="none" stroke="#fff" stroke-width="1.400">
        <path d="M3 27l5-5 5 5" stroke-width="1.700" />
        <path d="M32 22c1-8 11-9 14-3M46.500 14v5.500H41M45 28c-3 4-9 4-11-1M33 32v-5h5" /><circle cx="44" cy="28" r="4" fill="#ff8c00" stroke="none" />
        <path d="M64.500 20.500c4-5 11-5 15 0M67 23.500c3-3 7-3 10 0M69.500 26.500c2-2 3-2 5 0" /><circle cx="72" cy="28.500" r="1.500" fill="#fff" stroke="none" />
        <path stroke-width="1.200" d="M88.500 22h2.500l4-4v12l-4-4h-2.500zM98 21.500l5 5M103 21.500l-5 5" />
        <rect x="112.500" y="19" width="13" height="10" rx="2" /><path fill="#fff" stroke="none" d="M114.500 21h4v6h-4zM127 22h1.500v4H127z" />
      </svg>
      <div class="clock"><div>3:34 PM</div><div>10/22/2024</div></div>
      <svg width="80" height="48">
        <defs>
          <linearGradient id="tca" x1="0" y1="0" x2="0" y2="1"><stop offset="0" stop-color="#2aa5e8" /><stop offset=".55" stop-color="#3fb58a" /><stop offset="1" stop-color="#e8c820" /></linearGradient>
          <linearGradient id="tcb" x1="0" y1="0" x2="0" y2="1"><stop offset="0" stop-color="#a96cf0" /><stop offset="1" stop-color="#f0608c" /></linearGradient>
        </defs>
        <path fill="#8fe6fb" d="M11 27v-6c0-6 9-6 9 0v6l2 3H9zM13 31h5c0 3-5 3-5 0z" />
        <path fill="url(#tca)" d="M46 14h8c3 0 3 2 2 4l-4 10c-1 2-2 3-5 3h-5c-3 0-3-3-2-5l3-8c0-3 1-4 3-4z" /><path fill="#2358c9" d="M49 14h5c2 0 3 2 4 5h-5c-2 0-3-2-4-5z" /><path fill="url(#tcb)" d="M57 19h3c3 0 3 3 2 5l-3 9H50l4-10c1-3 1-4 3-4z" />
        <rect x="45" y="30" width="18" height="8" rx="2" fill="#ffc20e" /><text x="54" y="37" font-size="7" font-weight="700" text-anchor="middle" fill="#111">PRE</text>
      </svg>
    </div>
  </div>
</template>

<style>
html, body { margin: 0; background: #f3f2f1; overflow: hidden; }
</style>

<style scoped>
* { box-sizing: border-box; }
.app { width: 1920px; height: 1200px; display: flex; flex-direction: column; font-family: "Open Sans", "Noto Sans", sans-serif; font-size: 12px; letter-spacing: -0.3px; color: #252423; overflow: hidden; }
svg { display: block; flex: none; }
span, .card div { white-space: nowrap; }
button { font: inherit; letter-spacing: inherit; padding: 0; }

.titlebar { height: 34px; background: #3b3a39; color: #fff; display: flex; align-items: center; flex: none; }
.wtitle { margin: 6px 0 0 2px; width: 688px; }
.tsearch { width: 400px; height: 24px; background: #d2d0ce; border-radius: 2px; display: flex; align-items: center; padding-left: 16px; gap: 11px; color: #2b5f52; font-size: 13.5px; }
.signin { margin-left: 517px; width: 46px; margin-top: 2px; letter-spacing: -0.4px; }

.ribbon { height: 126px; background: #fafafa; flex: none; position: relative; z-index: 2; box-shadow: 0 1px 4px rgba(0,0,0,.22); }
.tabs { display: flex; height: 31px; }
.tab { display: flex; justify-content: center; font-size: 13.5px; letter-spacing: -0.15px; }
.tab span { line-height: 32px; height: 31px; }
.tab.on span { font-weight: 600; border-bottom: 3px solid #117865; letter-spacing: -0.5px; }
.tab.ctx { background: #fff; color: #117865; font-weight: 600; letter-spacing: -0.4px; }
.c1 { width: 75px; margin-right: 4px; }
.c2 { width: 100px; }
.share { margin: 4px 6px 0 auto; width: 84px; height: 24px; background: #117865; border: 0; border-radius: 4px; color: #fff; font-weight: 600; display: flex; align-items: center; justify-content: center; gap: 6px; font-size: 12px; letter-spacing: -0.6px; }
.share svg:last-child { margin-left: -2px; }
.groups { display: flex; padding-top: 5px; }
.group { height: 88px; border-right: 1px solid #d2d0ce; display: flex; flex-direction: column; justify-content: space-between; }
.clip { width: 161px; }
.cliprow { display: flex; height: 76px; }
.paste { width: 52px; padding: 5px 0 0 12px; color: #c8c6c4; }
.paste span { display: block; margin-left: 1px; margin-top: 1px; }
.small { display: flex; flex-direction: column; }
.small div { height: 24px; display: flex; align-items: center; gap: 3px; white-space: nowrap; letter-spacing: -0.35px; color: #3b3a39; }
.gitems { display: flex; height: 74px; padding-top: 5px; }
.gbtn { display: flex; flex-direction: column; align-items: center; color: #3b3a39; letter-spacing: -0.42px; }
.gbtn span { line-height: 16px; height: 16px; margin-top: 1px; }
.gbtn .l2 { display: flex; align-items: center; margin-top: 0; gap: 2px; }
.gbtn.dis { color: #c8c6c4; }
.gname { text-align: center; font-size: 10.5px; line-height: 8px; color: #3b3a39; letter-spacing: -0.3px; }
.collapse { margin: 77px 5px 0 auto; }

.body { flex: 1; display: flex; min-height: 0; background: #f3f2f1; }
.rail { width: 41px; border-right: 1px solid #e1dfdd; position: relative; }
.rail::before { content: ""; position: absolute; left: 0; top: 0; width: 3px; height: 40px; background: #117865; }
.center { width: 1517px; display: flex; flex-direction: column; }
.banner { height: 36px; background: #fff8a6; display: flex; align-items: center; padding-left: 12px; flex: none; letter-spacing: -0.31px; }
.banner span { margin-left: 8px; width: 1205px; padding-top: 1px; }
.banner button { height: 24px; border: 1px solid #797775; background: #fff; font-weight: 600; color: #333; letter-spacing: -0.35px; padding-top: 1px; }
.b1 { width: 114px; }
.b2 { width: 122px; margin-left: 8px; }
.bx { margin-left: 10px; }
.work { flex: 1; display: flex; min-height: 0; background: #fff; }
.canvas { width: 1316px; overflow: hidden; }
.ctitle { font-family: Roboto, sans-serif; font-size: 42px; fill: #252423; stroke: #252423; stroke-width: .5px; letter-spacing: 0; }
.dl { font-size: 30px; fill: #605e5c; letter-spacing: 0; }
.lg { font-size: 34px; fill: #605e5c; letter-spacing: 0; }
.lg.b { font-weight: 700; }
.filters { flex: 1; border-left: 1px solid #a19f9d; background: #fff; }
.fsbox { height: 45px; border-bottom: 1px solid #a19f9d; padding: 9px 0 0 8px; }
.fs { width: 180px; height: 31px; border: 1px solid #a19f9d; border-radius: 2px; display: flex; align-items: center; padding-left: 9px; gap: 14px; font-size: 12.5px; letter-spacing: -0.25px; }
.fsec { padding: 15px 8px 0 8px; letter-spacing: -0.25px; }
.fsec + .fsec { padding-top: 20px; }
.fh { height: 19px; display: flex; justify-content: space-between; align-items: center; margin-bottom: 7px; padding-right: 4px; }
.fsec + .fsec .fh { padding-top: 4px; height: 24px; }
.dots { width: 12px; height: 2px; margin-top: 4px; background: linear-gradient(90deg, #777 2px, transparent 2px 5px, #777 5px 7px, transparent 7px 10px, #777 10px); }
.card { height: 46px; border: 1px solid #c8c6c4; border-radius: 2px; margin-bottom: 6px; padding: 4px 8px; line-height: 18px; }
.card.add { display: flex; align-items: center; justify-content: center; margin-bottom: 0; padding: 1px 0 0; }
.pages { height: 35px; background: #f3f2f1; display: flex; flex: none; }
.dev { width: 24px; margin-left: 10px; padding-top: 5px; display: flex; flex-direction: column; align-items: center; }
.dev i { width: 24px; height: 3px; background: #117865; border-radius: 1px; margin-top: 5px; }
.dev svg { margin-left: -2px; }
.phone { margin: 5px 0 0 25px; }
.arrows { margin: 13px 0 0 20px; }
.ptab { margin-left: 6px; width: 76px; background: #fff; border-left: 1px solid #a19f9d; border-bottom: 4px solid #117865; text-align: center; line-height: 37px; font-weight: 600; letter-spacing: -0.6px; }
.plus { width: 40px; background: #117865; display: flex; align-items: center; justify-content: center; }

.viz { width: 181px; border-left: 1px solid #d2d0ce; }
.ph { height: 40px; display: flex; align-items: center; justify-content: space-between; padding: 0 8px 1px 8px; font-size: 15.5px; font-weight: 600; letter-spacing: -0.35px; }
.viz .ph { padding-right: 7px; }
.bv { padding-left: 8px; line-height: 12px; height: 16px; font-weight: 600; letter-spacing: -0.4px; }
.vgrid { display: grid; grid-template-columns: repeat(6, 28px); grid-auto-rows: 28px; margin: 4px 0 0 6px; }
.vgrid div { display: flex; align-items: center; justify-content: center; }
.vgrid .sel { margin: 2px; border: 1px solid #222; }
.vdots { display: flex; gap: 5px; padding: 12px 0 0 12px; height: 33px; border-bottom: 1px solid #dad8d6; }
.vdots i { width: 2px; height: 2px; background: #444; }
.wells { padding: 0 6px 0 4px; letter-spacing: -0.2px; }
.wl { padding-left: 8px; line-height: 34px; height: 32px; }
.wl:first-child { height: 31px; }
.well { width: 170px; height: 37px; border: 1px dashed #c8c6c4; background: #fff; padding: 3px 2px; }
.chip { height: 23px; border: 1px solid #b3b0ad; background: #edebe9; display: flex; align-items: center; justify-content: space-between; padding: 0 3px 0 4px; border-radius: 1px; line-height: 20px; }
.chip svg { margin-right: 1px; }
.well.empty { height: 28px; line-height: 20px; padding: 3px 10px; letter-spacing: -0.22px; }
.well.drill { height: 26px; line-height: 20px; padding: 2px 8px; white-space: nowrap; letter-spacing: -0.24px; margin-top: 5px; }
.dt { padding-left: 8px; height: 30px; line-height: 37px; font-weight: 600; color: #484644; }
.tg { height: 27px; display: flex; align-items: center; justify-content: space-between; padding: 0 11px 0 8px; letter-spacing: -0.3px; }
.tg b { margin-right: 5px; width: 32px; height: 16px; border-radius: 8px; background: #117865; color: #fff; font-size: 9.5px; font-weight: 700; display: flex; align-items: center; padding-left: 5px; gap: 2px; letter-spacing: -0.2px; }
.tg b i { width: 8px; height: 8px; border-radius: 4px; background: #fff; }

.data { flex: 1; border-left: 1px solid #d2d0ce; color: #3b3a39; }
.data .ph { color: #252423; }
.ds { width: 172px; height: 24px; margin: 5px 0 9px 4px; border: 1px solid #d2d0ce; border-bottom-color: #605e5c; border-radius: 4px; background: #fff; display: flex; align-items: center; gap: 5px; padding-left: 12px; font-size: 13px; color: #605e5c; letter-spacing: -0.2px; }
.trow { height: 24px; display: flex; align-items: center; padding-left: 12px; letter-spacing: -0.2px; }
.frow { height: 24px; display: flex; align-items: center; padding-left: 44px; letter-spacing: -0.15px; }
.frow .dots { margin: 0 7px 0 auto; }
.cb { width: 12px; height: 12px; border: 1px solid #797775; border-radius: 2px; display: flex; align-items: center; justify-content: center; margin-right: 8px; }
.cb.ck { background: #117865; border-color: #117865; }
.sig { margin-right: 6px; }

.status { height: 24px; border-top: 1px solid #dad8d6; background: #f3f2f1; display: flex; align-items: center; padding-left: 4px; color: #484644; letter-spacing: -0.15px; }
.status > span:first-child { width: 1702px; padding-top: 2px; }
.zoom { margin-left: 8px; width: 42px; letter-spacing: -0.4px; }
.fit { margin-top: 0; }

.taskbar { height: 49px; background: #1c1c1c; border-top: 1px solid #000; display: flex; align-items: center; color: #fff; flex: none; }
.start { margin-left: 21px; }
.tks { width: 220px; height: 32px; margin-left: 13px; border-radius: 16px; background: #3b3b3b; border: 1px solid #555; display: flex; align-items: center; padding-left: 11px; font-size: 13.5px; color: #ddd; }
.tks span { margin-left: 9px; width: 134px; }
.apps { display: flex; margin-left: 2px; }
.appi { width: 44px; height: 40px; display: flex; flex-direction: column; align-items: center; padding-top: 7px; position: relative; border-radius: 4px; }
.appi i { position: absolute; bottom: 1px; width: 6px; height: 3px; border-radius: 2px; background: #9a9a9a; }
.appi.act { background: #292929; box-shadow: inset 0 0 0 1px #383838; width: 36px; margin: 0 4px; }
.appi.act i { width: 16px; background: #4cc2ff; }
.tray { margin-left: 999px; }
.clock { width: 66px; text-align: right; font-size: 11.5px; line-height: 16px; letter-spacing: -0.1px; }
</style>
